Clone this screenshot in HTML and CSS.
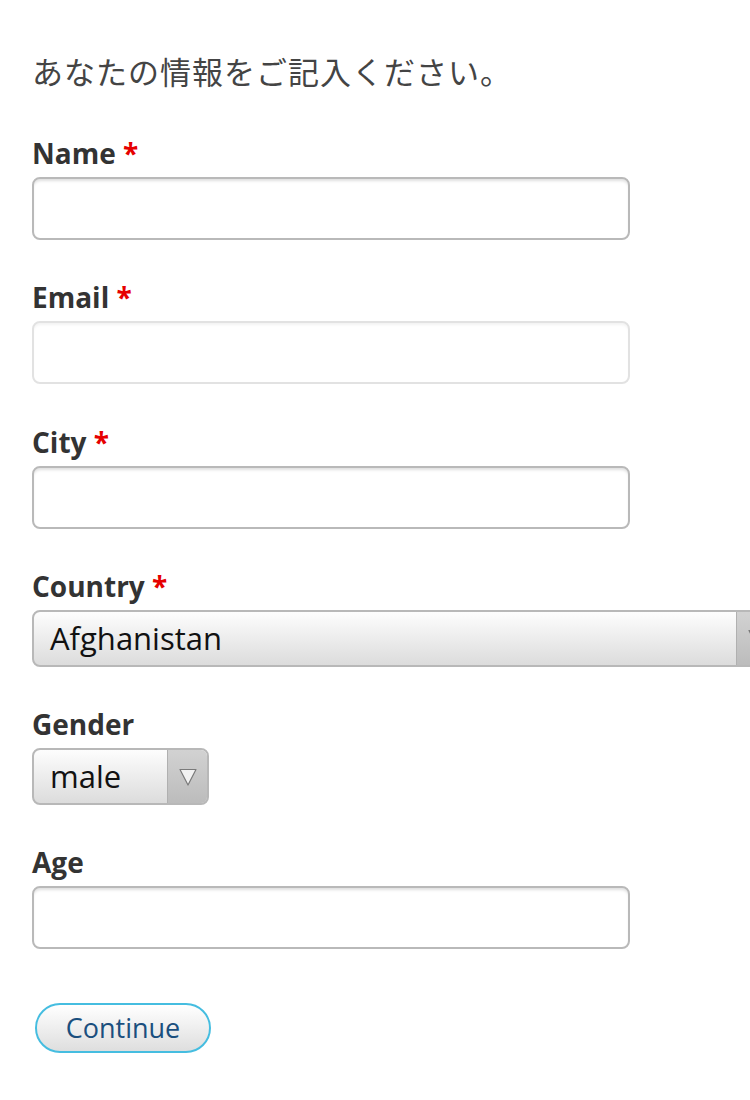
FILE: index.html
```html
<!DOCTYPE html>
<html lang="ja">
<head>
<meta charset="utf-8">
<title>Form</title>
<link rel="stylesheet" href="styles.css">
</head>
<body>
<div class="page">
  <p class="intro">あなたの情報をご記入ください。</p>
  <form class="form">
    <div class="field">
      <label class="label">Name <span class="req">*</span></label>
      <input class="input" type="text">
    </div>
    <div class="field">
      <label class="label">Email <span class="req">*</span></label>
      <input class="input input-light" type="text">
    </div>
    <div class="field">
      <label class="label">City <span class="req">*</span></label>
      <input class="input" type="text">
    </div>
    <div class="field">
      <label class="label">Country <span class="req">*</span></label>
      <div class="select select-wide">
        <span class="select-value">Afghanistan</span>
        <span class="select-arrow"><svg width="20" height="20" viewBox="0 0 20 20"><polygon points="2,2.5 18,2.5 10,18" fill="#f2f2f2" stroke="#7a7a7a" stroke-width="1.2" stroke-linejoin="round"/></svg></span>
      </div>
    </div>
    <div class="field">
      <label class="label">Gender</label>
      <div class="select select-small">
        <span class="select-value">male</span>
        <span class="select-arrow"><svg width="20" height="20" viewBox="0 0 20 20"><polygon points="2,2.5 18,2.5 10,18" fill="#f2f2f2" stroke="#7a7a7a" stroke-width="1.2" stroke-linejoin="round"/></svg></span>
      </div>
    </div>
    <div class="field">
      <label class="label">Age</label>
      <input class="input" type="text">
    </div>
    <div class="actions">
      <button class="btn" type="button">Continue</button>
    </div>
  </form>
</div>
</body>
</html>
```

FILE: styles.css
```css
html, body {
  margin: 0;
  padding: 0;
  background: #ffffff;
}
.page {
  width: 750px;
  overflow: hidden;
  padding: 0 0 40px 32px;
  box-sizing: border-box;
  font-family: "Open Sans", "Noto Sans", sans-serif;
}
.intro {
  margin: 0;
  padding-top: 50px;
  font-family: "Noto Sans CJK JP", "Noto Sans", sans-serif;
  font-size: 31px;
  line-height: 42px;
  letter-spacing: 1px;
  color: #444444;
}
.form {
  margin-top: 43px;
  display: flex;
  flex-direction: column;
}
.field {
  display: flex;
  flex-direction: column;
  margin-bottom: 39.25px;
}
.label {
  font-size: 28px;
  line-height: 36px;
  font-weight: 700;
  color: #333333;
  margin-bottom: 6px;
}
.req {
  color: #e60000;
}
.input {
  width: 598px;
  height: 63px;
  box-sizing: border-box;
  border: 2px solid #b9b9b9;
  border-radius: 8px;
  background: #ffffff;
  box-shadow: inset 0 3px 3px -1px rgba(0,0,0,0.13);
  margin: 0;
  padding: 0 14px;
  font: inherit;
}
.input-light {
  border-color: #e2e2e2;
  box-shadow: inset 0 3px 3px -1px rgba(0,0,0,0.05);
}
.select {
  display: flex;
  height: 57px;
  box-sizing: border-box;
  border: 2px solid #b8b8b8;
  border-radius: 8px;
  overflow: hidden;
  background: linear-gradient(#fdfdfd, #dcdcdc);
}
.select-wide {
  width: 746px;
  flex: none;
}
.select-small {
  width: 177px;
}
.select-value {
  flex: 1;
  padding-left: 16px;
  font-size: 31px;
  line-height: 53px;
  color: #111111;
}
.select-arrow {
  width: 39px;
  flex: none;
  border-left: 1px solid #b0b0b0;
  background: linear-gradient(#d2d2d2, #bcbcbc);
  display: flex;
  align-items: center;
  justify-content: center;
}
.actions {
  margin-top: 14.5px;
  padding-left: 3px;
}
.btn {
  width: 176px;
  height: 50px;
  box-sizing: border-box;
  border: 2px solid #45bde0;
  border-radius: 25px;
  background: linear-gradient(#ffffff, #dedede);
  color: #1a4f7e;
  font-family: "Open Sans", "Noto Sans", sans-serif;
  font-size: 27px;
  line-height: 44px;
  padding: 0;
}
```
